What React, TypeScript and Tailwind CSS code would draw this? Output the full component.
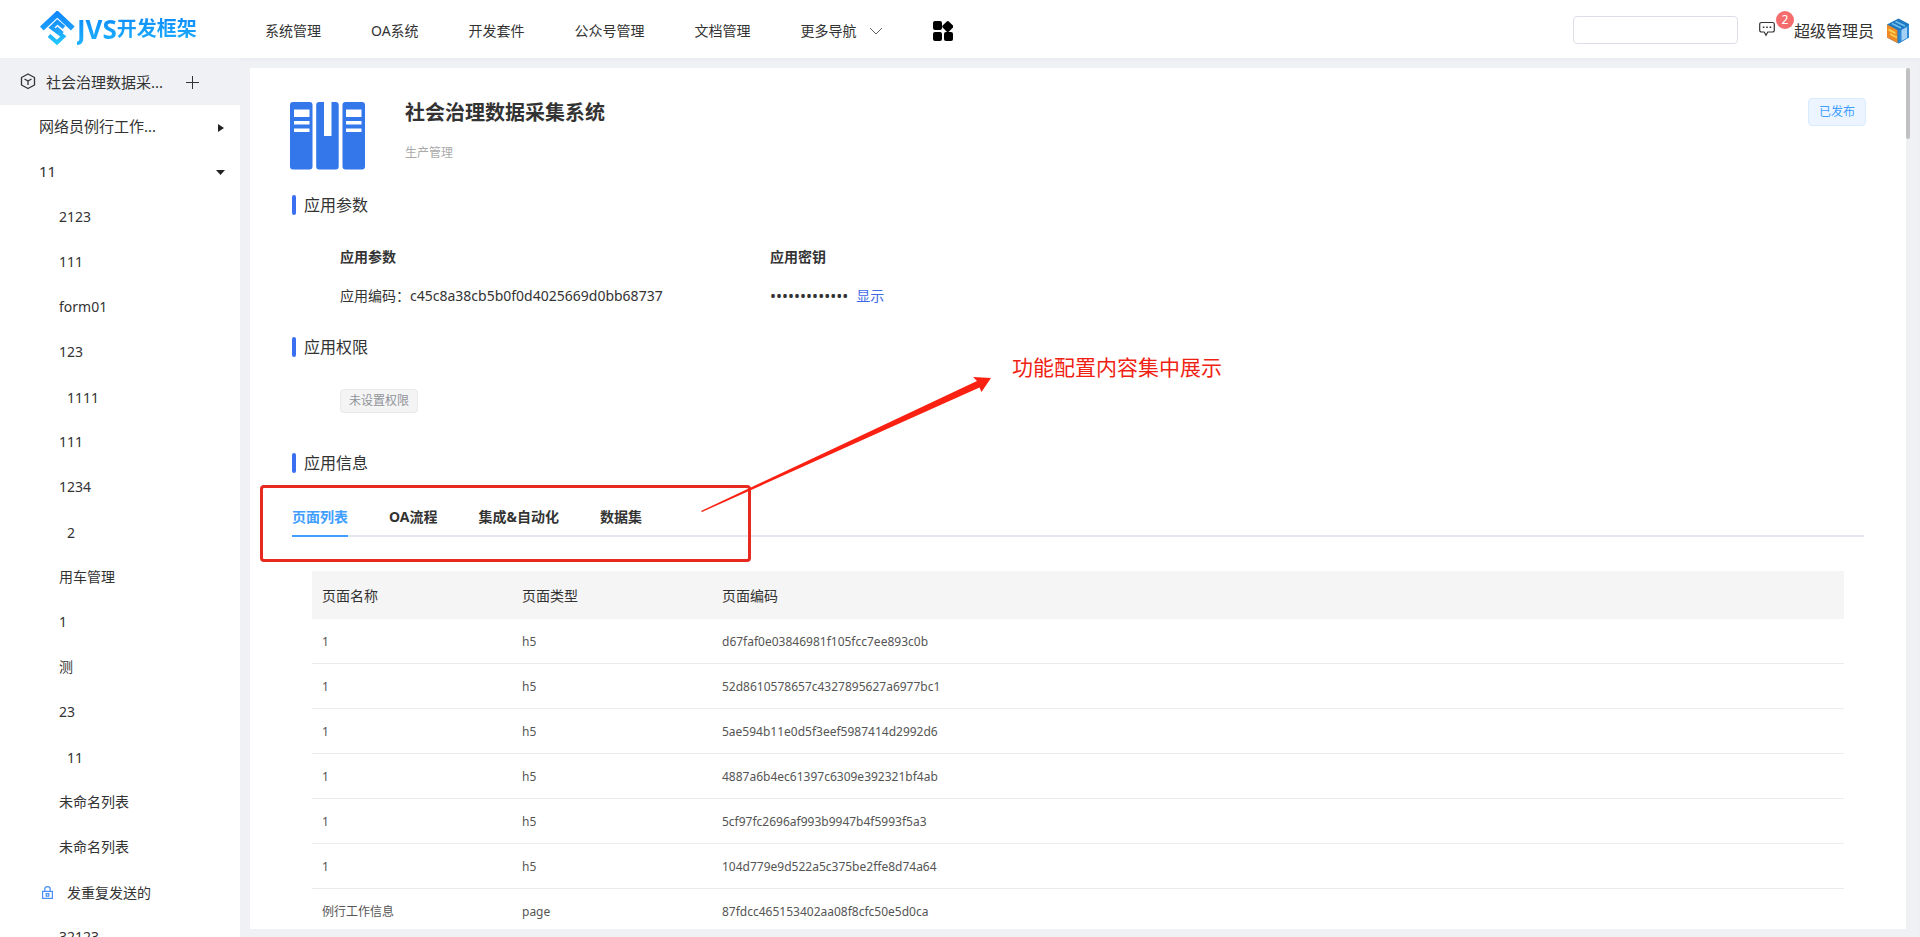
import React, { useState } from 'react';

interface MenuItem {
  name: string;
  indent?: boolean;
  locked?: boolean;
}

const navList = ['系统管理', 'OA系统', '开发套件', '公众号管理', '文档管理'];

const menuList: MenuItem[] = [
  { name: '2123' },
  { name: '111' },
  { name: 'form01' },
  { name: '123' },
  { name: '1111', indent: true },
  { name: '111' },
  { name: '1234' },
  { name: '2', indent: true },
  { name: '用车管理' },
  { name: '1' },
  { name: '测' },
  { name: '23' },
  { name: '11', indent: true },
  { name: '未命名列表' },
  { name: '未命名列表' },
  { name: '发重复发送的', locked: true },
  { name: '32123' },
];

const tabs = ['页面列表', 'OA流程', '集成&自动化', '数据集'];

const pages = [
  { name: '1', type: 'h5', code: 'd67faf0e03846981f105fcc7ee893c0b' },
  { name: '1', type: 'h5', code: '52d8610578657c4327895627a6977bc1' },
  { name: '1', type: 'h5', code: '5ae594b11e0d5f3eef5987414d2992d6' },
  { name: '1', type: 'h5', code: '4887a6b4ec61397c6309e392321bf4ab' },
  { name: '1', type: 'h5', code: '5cf97fc2696af993b9947b4f5993f5a3' },
  { name: '1', type: 'h5', code: '104d779e9d522a5c375be2ffe8d74a64' },
  { name: '例行工作信息', type: 'page', code: '87fdcc465153402aa08f8cfc50e5d0ca' },
];

const Logo = () => (
  <a href="#" className="flex w-[225px] shrink-0 items-center">
    <svg width="35" height="36" viewBox="0 0 35 36" fill="none">
      <defs>
        <linearGradient id="logo" x1="0" y1="0" x2="0" y2="35" gradientUnits="userSpaceOnUse">
          <stop offset="0" stopColor="#0d86fb" />
          <stop offset="0.5" stopColor="#1c9dfd" />
          <stop offset="1" stopColor="#22d0ff" />
        </linearGradient>
      </defs>
      <path d="M1.800 17.500 17.300 3 32.800 17.500" stroke="url(#logo)" strokeWidth="5.400" />
      <path d="M24 16.500 17.300 11 11.500 16.500 23.300 25.500 17 31.500 9 24.500" stroke="url(#logo)" strokeWidth="4" />
      <path d="M16.500 16.500 23 22" stroke="url(#logo)" strokeWidth="2.400" />
    </svg>
    <span className="ml-0.5 flex items-center bg-linear-to-b from-[#0f86fa] to-[#20b4ff] bg-clip-text font-bold leading-8 text-transparent">
      <span className="font-['Liberation_Sans_Narrow','Noto_Sans',sans-serif] text-[26px]">JVS</span>
      <span className="text-xl">开发框架</span>
    </span>
  </a>
);

const Header = () => (
  <header className="flex h-[58px] shrink-0 items-center bg-white pl-10 pr-[10px]">
    <Logo />
    <nav className="flex items-center gap-[50px] whitespace-nowrap pt-[3px] text-sm">
      {navList.map((name) => (
        <a href="#" key={name}>
          {name}
        </a>
      ))}
      <button className="flex items-center gap-3">
        更多导航
        <svg width="14" height="8" viewBox="0 0 14 8" fill="none" stroke="#666">
          <path d="M1 1 7 7 13 1" />
        </svg>
      </button>
      <button aria-label="应用">
        <svg width="20" height="20" viewBox="0 0 20 20">
          <rect width="9" height="9" rx="2" />
          <rect y="11" width="9" height="9" rx="2" />
          <rect x="11" y="11" width="9" height="9" rx="2" />
          <rect x="10.4" y="1.200" width="8.800" height="8.800" rx="1.8" transform="rotate(45 14.8 5.6)" />
        </svg>
      </button>
    </nav>
    <div className="ml-auto flex items-center">
      <input aria-label="搜索" className="mt-0.5 h-7 w-[165px] rounded border border-[#dcdfe6] px-2 text-sm outline-none" />
      <button aria-label="消息" className="relative ml-5">
        <svg width="18" height="16" viewBox="0 0 18 16" fill="none" stroke="#333" strokeWidth="1.2">
          <path d="M3.5 1.5h11a1.8 1.8 0 0 1 1.8 1.8v5.9a1.8 1.8 0 0 1-1.8 1.8H9.8L8 14.2 6.2 11H3.5a1.8 1.8 0 0 1-1.8-1.8V3.3a1.8 1.8 0 0 1 1.8-1.8Z" />
          <path d="M4.8 6.3h1.6M8.2 6.3h1.6M11.6 6.3h1.6" strokeWidth="1.6" />
        </svg>
        <span className="absolute -top-2.5 left-[18px] h-[18px] w-[18px] rounded-full bg-[#f56c6c] text-center text-xs leading-[18px] text-white">
          2
        </span>
      </button>
      <div className="ml-[18px] flex items-center pt-[3px]">
        <span className="text-base leading-6">超级管理员</span>
        <svg className="ml-3" width="24" height="26" viewBox="0 0 24 26">
          <path d="M12.500.500 23 6v13.500L12.500 25.500 1 19.500V6.500Z" fill="#1f78c1" />
          <path d="M1 6.500 11.500 12v13L1 19.500Z" fill="#f08a24" />
          <path d="M2.500 10.500 9.500 14v2.200L2.500 12.700ZM4 15 11 18.500v2L4 17Z" fill="#fbd04f" />
          <path d="M12.500 13 23 7v12.500L12.500 25.500Z" fill="#2f8ad6" />
          <path d="M15.500 12 21 9v11L15.500 23Z" fill="#a5d0f5" />
          <path d="M6 5.500 15 10M9.500 3.500 19 8" stroke="#6fc2ee" strokeWidth="1.400" />
        </svg>
      </div>
    </div>
  </header>
);

const Sidebar = () => (
  <aside className="w-60 shrink-0 overflow-hidden bg-white">
    <div className="flex h-[47px] items-center bg-[#f0f1f5] pl-5 text-[15px]">
      <svg width="16" height="18" viewBox="0 0 16 18" fill="none" stroke="#333" strokeWidth="1.3">
        <path d="M8 1 14.500 4.500v7.500L8 15.500 1.500 12V4.500Z" strokeLinejoin="round" />
        <path d="M4.500 6 8 8l3.500-2M8 8v4" />
      </svg>
      <span className="ml-2.5 w-[140px] pt-0.5">社会治理数据采...</span>
      <button aria-label="新增" className="pt-0.5">
        <svg width="13" height="13" viewBox="0 0 13 13" stroke="#333">
          <path d="M6.5 0v13M0 6.5h13" />
        </svg>
      </button>
    </div>
    <button className="flex h-[45px] w-full items-center justify-between pl-[39px] pr-4 text-[15px]">
      <span className="pb-0.5">网络员例行工作...</span>
      <svg width="6" height="8" viewBox="0 0 6 8">
        <path d="M0 0 6 4 0 8Z" fill="#222" />
      </svg>
    </button>
    <button className="flex h-[45px] w-full items-center justify-between pl-[39px] pr-[15px] text-[15px]">
      <span className="pb-0.5">11</span>
      <svg width="9" height="5" viewBox="0 0 9 5">
        <path d="M0 0H9L4.5 5Z" fill="#222" />
      </svg>
    </button>
    <ul className="text-sm">
      {menuList.map((item, key) => (
        <li key={key}>
          <a href="#" className={`flex h-[45px] items-center ${item.locked ? 'pl-[42px]' : item.indent ? 'pl-[67px]' : 'pb-0.5 pl-[59px]'}`}>
            {item.locked && (
              <svg className="mr-3.5" width="11" height="13" viewBox="0 0 11 13" fill="none" stroke="#4a8ff5" strokeWidth="1.2">
                <path d="M.6 5.4h9.8v7H.6ZM2.8 5.4V3.3a2.7 2.7 0 0 1 5.4 0v2.1M4.2 7.6h2.6v2.6H4.2Z" />
              </svg>
            )}
            {item.name}
          </a>
        </li>
      ))}
    </ul>
  </aside>
);

const SectionTitle = ({ children }: { children: React.ReactNode }) => (
  <h2 className="flex h-5 items-center gap-2 text-base leading-5">
    <span className="h-5 w-1 rounded-sm bg-[#3a6ff2]" />
    {children}
  </h2>
);

const AppIcon = () => (
  <svg width="75" height="68" viewBox="0 0 75 68">
    <g fill="#3377ea">
      <rect width="22.5" height="67.5" rx="3" />
      <rect x="26.2" width="22.5" height="67.5" rx="3" />
      <rect x="52.5" width="22.5" height="67.5" rx="3" />
    </g>
    <path
      fill="#fff"
      d="M4 7.5h15.500v7.500H4ZM4 19h15.500v3.500H4ZM4 26.500h15.500v3.500H4ZM56 7.500h15.500v7.500H56ZM56 19h15.500v3.500H56ZM56 26.500h15.500v3.500H56ZM34 0h7.500v34H34Z"
    />
  </svg>
);

const PageTable = () => (
  <table className="w-full table-fixed border-separate border-spacing-0 text-left">
    <thead>
      <tr className="h-12 bg-[#f5f5f5] text-sm">
        <th className="w-[200px] px-2.5 pt-0.5 font-normal">页面名称</th>
        <th className="w-[200px] px-2.5 pt-0.5 font-normal">页面类型</th>
        <th className="px-2.5 pt-0.5 font-normal">页面编码</th>
      </tr>
    </thead>
    <tbody>
      {pages.map(({ name, type, code }) => (
        <tr key={code} className="h-[45px] text-xs text-[#555]">
          <td className="border-b border-[#ebebeb] px-2.5 pt-0.5">{name}</td>
          <td className="border-b border-[#ebebeb] px-2.5 pt-0.5">{type}</td>
          <td className="border-b border-[#ebebeb] px-2.5 pt-0.5">{code}</td>
        </tr>
      ))}
    </tbody>
  </table>
);

// red marker box, arrow and note laid over the tabs
const Note = () => (
  <div className="pointer-events-none absolute left-[10px] top-[299px] text-[#f01f14]">
    <div className="absolute left-0 top-[118px] h-[77px] w-[491px] rounded-sm border-3 border-[#e8291f]" />
    <svg className="absolute left-[440px] top-0" width="300" height="150" viewBox="0 0 300 150">
      <path d="M1 144 277 14 273 10 291 11 281.500 25 279.500 20.500 2 145Z" fill="#fb2112" />
    </svg>
    <p className="absolute left-[752px] -top-[14px] whitespace-nowrap text-[21px] leading-7">功能配置内容集中展示</p>
  </div>
);

const App = () => {
  const [active, setActive] = useState(tabs[0]);

  return (
    <div className="flex h-screen flex-col overflow-hidden bg-[#f0f1f5] font-['Noto_Sans','Noto_Sans_CJK_SC',sans-serif] text-[#333]">
      <Header />
      <div className="flex min-h-0 flex-1 shadow-[inset_0_2px_2px_#eaeaf0]">
        <Sidebar />
        <main className="mb-2 ml-[10px] mr-[10px] mt-[10px] flex min-w-0 flex-1 bg-white">
          <div className="relative min-w-0 flex-1 overflow-hidden px-10 pt-[34px]">
            <div className="flex items-start">
              <AppIcon />
              <div className="ml-10 pt-px">
                <h1 className="text-xl font-bold leading-5">社会治理数据采集系统</h1>
                <p className="mt-5 text-xs leading-5 text-[#aaa]">生产管理</p>
              </div>
              <span className="-mt-1 ml-auto rounded border border-[#d9ecff] bg-[#ecf5ff] px-2.5 text-xs leading-[26px] text-[#409eff]">
                已发布
              </span>
            </div>

            <div className="px-0.5 pt-[25px]">
              <SectionTitle>应用参数</SectionTitle>
              <dl className="mt-8 flex pl-12 text-sm leading-5">
                <div className="w-[430px]">
                  <dt className="font-bold">应用参数</dt>
                  <dd className="mt-[19px]">应用编码：c45c8a38cb5b0f0d4025669d0bb68737</dd>
                </div>
                <div>
                  <dt className="font-bold">应用密钥</dt>
                  <dd className="mt-[19px] flex gap-2">
                    <span className="text-base leading-5">•••••••••••••</span>
                    <button className="text-[#4068e8]">显示</button>
                  </dd>
                </div>
              </dl>

              <div className="mt-[31px]">
                <SectionTitle>应用权限</SectionTitle>
              </div>
              <div className="mt-8 flex pl-12">
                <span className="rounded border border-[#e9e9eb] bg-[#f4f4f5] px-2 text-xs leading-[22px] text-[#909399]">未设置权限</span>
              </div>

              <div className="mt-10">
                <SectionTitle>应用信息</SectionTitle>
              </div>
              <div className="mt-[34px] flex gap-[41px] text-sm font-bold leading-5 shadow-[inset_0_-2px_#e4e7ed]">
                {tabs.map((name) => (
                  <button
                    key={name}
                    onClick={() => setActive(name)}
                    className={`border-b-2 pb-2 ${active === name ? 'border-[#409eff] text-[#409eff]' : 'border-transparent'}`}>
                    {name}
                  </button>
                ))}
              </div>
              <div className="mt-[34px] px-5">
                <PageTable />
              </div>
            </div>
            <Note />
          </div>
          <div className="w-1 shrink-0 bg-[#eff1f1]">
            <div className="h-[71px] rounded-full bg-[#c0c0c0]" />
          </div>
        </main>
      </div>
    </div>
  );
};

export default App;
